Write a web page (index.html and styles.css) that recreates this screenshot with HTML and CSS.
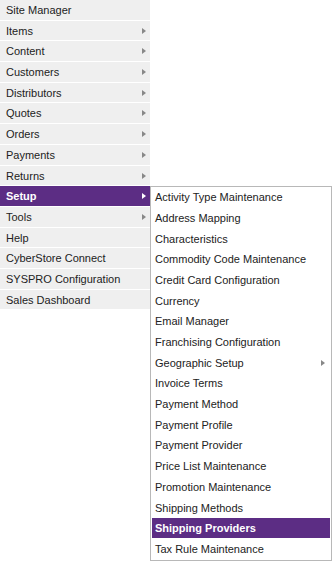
FILE: index.html
```html
<!DOCTYPE html>
<html lang="en">
<head>
  <meta charset="UTF-8" />
  <title>Site Manager Menu</title>
  <link rel="stylesheet" href="styles.css">
</head>
<body>

<ul class="menu">
  <li class="menu-item">Site Manager</li>
  <li class="menu-item has-sub">Items</li>
  <li class="menu-item has-sub">Content</li>
  <li class="menu-item has-sub">Customers</li>
  <li class="menu-item has-sub">Distributors</li>
  <li class="menu-item has-sub">Quotes</li>
  <li class="menu-item has-sub">Orders</li>
  <li class="menu-item has-sub">Payments</li>
  <li class="menu-item has-sub">Returns</li>
  <li class="menu-item has-sub active">Setup
    <ul class="submenu">
      <li class="sub-item">Activity Type Maintenance</li>
      <li class="sub-item">Address Mapping</li>
      <li class="sub-item">Characteristics</li>
      <li class="sub-item">Commodity Code Maintenance</li>
      <li class="sub-item">Credit Card Configuration</li>
      <li class="sub-item">Currency</li>
      <li class="sub-item">Email Manager</li>
      <li class="sub-item">Franchising Configuration</li>
      <li class="sub-item has-sub">Geographic Setup</li>
      <li class="sub-item">Invoice Terms</li>
      <li class="sub-item">Payment Method</li>
      <li class="sub-item">Payment Profile</li>
      <li class="sub-item">Payment Provider</li>
      <li class="sub-item">Price List Maintenance</li>
      <li class="sub-item">Promotion Maintenance</li>
      <li class="sub-item">Shipping Methods</li>
      <li class="sub-item active">Shipping Providers</li>
      <li class="sub-item">Tax Rule Maintenance</li>
    </ul>
  </li>
  <li class="menu-item has-sub">Tools</li>
  <li class="menu-item">Help</li>
  <li class="menu-item">CyberStore Connect</li>
  <li class="menu-item">SYSPRO Configuration</li>
  <li class="menu-item">Sales Dashboard</li>
</ul>

</body>
</html>
```

FILE: styles.css
```css
html,
body {
  height: 100%;
}

body {
  margin: 0;
  min-height: 561px;
  background-color: #fff;
  font-family: "Liberation Sans", Arial, sans-serif;
  font-size: 11px;
  color: #222;
}

ul {
  list-style: none;
  margin: 0;
  padding: 0;
}

.menu {
  width: 150px;
}

.menu-item {
  position: relative;
  height: 19.7px;
  line-height: 20.5px;
  padding-left: 6px;
  background-color: #efefef;
  border-bottom: 1px solid #fff;
}

.menu-item.active {
  background-color: #5c2d84;
  color: #fff;
  font-weight: bold;
}

.has-sub::after {
  content: "";
  position: absolute;
  right: 4px;
  top: 7px;
  border-left: 4px solid #888;
  border-top: 3px solid transparent;
  border-bottom: 3px solid transparent;
}

.menu-item.active::after {
  border-left-color: #fff;
}

.submenu {
  position: absolute;
  left: 100%;
  top: 0;
  width: 178px;
  padding: 0 1px;
  background-color: #fff;
  border: 1px solid #b8b8b8;
  z-index: 2;
}

.sub-item {
  position: relative;
  height: 19.7px;
  line-height: 20.5px;
  padding-left: 3px;
  border-bottom: 1px solid transparent;
  color: #222;
  font-weight: normal;
}

.sub-item.has-sub::after {
  right: 5px;
}

.sub-item.active {
  background-color: #5c2d84;
  background-clip: padding-box;
  color: #fff;
  font-weight: bold;
}
```
